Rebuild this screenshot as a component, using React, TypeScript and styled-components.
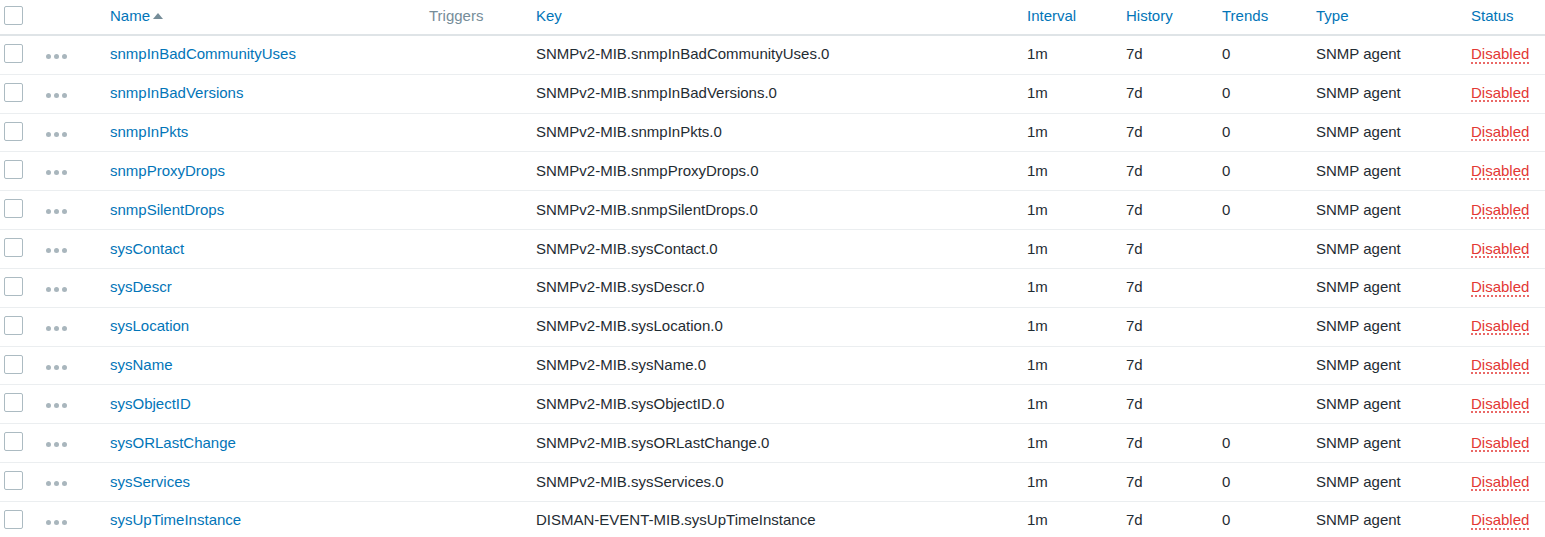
import React, { FunctionComponent } from "react";
import styled, { createGlobalStyle } from "styled-components";

type TItem = {
  name: string;
  key: string;
  interval: string;
  history: string;
  trends: string;
  type: string;
};

const items: TItem[] = [
  { name: "snmpInBadCommunityUses", key: "SNMPv2-MIB.snmpInBadCommunityUses.0", interval: "1m", history: "7d", trends: "0", type: "SNMP agent" },
  { name: "snmpInBadVersions", key: "SNMPv2-MIB.snmpInBadVersions.0", interval: "1m", history: "7d", trends: "0", type: "SNMP agent" },
  { name: "snmpInPkts", key: "SNMPv2-MIB.snmpInPkts.0", interval: "1m", history: "7d", trends: "0", type: "SNMP agent" },
  { name: "snmpProxyDrops", key: "SNMPv2-MIB.snmpProxyDrops.0", interval: "1m", history: "7d", trends: "0", type: "SNMP agent" },
  { name: "snmpSilentDrops", key: "SNMPv2-MIB.snmpSilentDrops.0", interval: "1m", history: "7d", trends: "0", type: "SNMP agent" },
  { name: "sysContact", key: "SNMPv2-MIB.sysContact.0", interval: "1m", history: "7d", trends: "", type: "SNMP agent" },
  { name: "sysDescr", key: "SNMPv2-MIB.sysDescr.0", interval: "1m", history: "7d", trends: "", type: "SNMP agent" },
  { name: "sysLocation", key: "SNMPv2-MIB.sysLocation.0", interval: "1m", history: "7d", trends: "", type: "SNMP agent" },
  { name: "sysName", key: "SNMPv2-MIB.sysName.0", interval: "1m", history: "7d", trends: "", type: "SNMP agent" },
  { name: "sysObjectID", key: "SNMPv2-MIB.sysObjectID.0", interval: "1m", history: "7d", trends: "", type: "SNMP agent" },
  { name: "sysORLastChange", key: "SNMPv2-MIB.sysORLastChange.0", interval: "1m", history: "7d", trends: "0", type: "SNMP agent" },
  { name: "sysServices", key: "SNMPv2-MIB.sysServices.0", interval: "1m", history: "7d", trends: "0", type: "SNMP agent" },
  { name: "sysUpTimeInstance", key: "DISMAN-EVENT-MIB.sysUpTimeInstance", interval: "1m", history: "7d", trends: "0", type: "SNMP agent" },
];

const GlobalStyle = createGlobalStyle`
  body {
    margin: 0;
    background: #ffffff;
    font-family: "Liberation Sans", Arial, sans-serif;
    font-size: 15px;
    color: #1f2c33;
  }
`;

const COLUMNS = "45px 65px 319px 107px 491px 99px 96px 94px 155px 74px";

const StyledTable = styled.div`
  width: 1545px;
`;

const StyledHeaderRow = styled.div`
  display: grid;
  grid-template-columns: ${COLUMNS};
  align-items: center;
  height: 36px;
  box-sizing: border-box;
  border-bottom: 2px solid #dfe4e7;
  padding-bottom: 3px;
`;

const StyledRow = styled.div`
  display: grid;
  grid-template-columns: ${COLUMNS};
  align-items: center;
  height: 38.83px;
  box-sizing: border-box;
  border-bottom: 1px solid #ebeef0;
`;

const StyledCell = styled.div`
  white-space: nowrap;
  overflow: hidden;
  padding-bottom: 2px;
`;

const StyledHeaderCell = styled.div<{ $muted?: boolean }>`
  white-space: nowrap;
  color: ${(p) => (p.$muted ? "#768d99" : "#0275b8")};
  display: flex;
  align-items: center;
  gap: 3px;
`;

const StyledCheckCell = styled.div`
  padding-left: 4px;
  display: flex;
  align-items: center;
`;

const StyledCheckbox = styled.span<{ $head?: boolean }>`
  display: block;
  width: 19px;
  height: 19px;
  margin-top: ${(p) => (p.$head ? "0" : "-3px")};
  box-sizing: border-box;
  border: 1px solid #acbbc2;
  border-radius: 2px;
  background: #ffffff;
`;

const StyledDots = styled.span`
  display: flex;
  gap: 3px;
  padding-top: 5px;
  padding-left: 1px;

  & > i {
    display: block;
    width: 5px;
    height: 5px;
    border-radius: 50%;
    background: #a9b6bd;
  }
`;

const StyledLink = styled.span`
  color: #0275b8;
`;

const StyledStatus = styled.span`
  color: #e33734;
  text-decoration: underline dotted #e33734;
  text-underline-offset: 3px;
`;

const SortArrow = () => (
  <svg width="10" height="7" viewBox="0 0 10 7">
    <path d="M0 7 L5 1 L10 7 Z" fill="#768d99" />
  </svg>
);

const App: FunctionComponent = () => {
  return (
    <>
      <GlobalStyle />
      <StyledTable>
        <StyledHeaderRow>
          <StyledCheckCell>
            <StyledCheckbox $head />
          </StyledCheckCell>
          <StyledHeaderCell />
          <StyledHeaderCell>
            Name
            <SortArrow />
          </StyledHeaderCell>
          <StyledHeaderCell $muted>Triggers</StyledHeaderCell>
          <StyledHeaderCell>Key</StyledHeaderCell>
          <StyledHeaderCell>Interval</StyledHeaderCell>
          <StyledHeaderCell>History</StyledHeaderCell>
          <StyledHeaderCell>Trends</StyledHeaderCell>
          <StyledHeaderCell>Type</StyledHeaderCell>
          <StyledHeaderCell>Status</StyledHeaderCell>
        </StyledHeaderRow>
        {items.map((item) => (
          <StyledRow key={item.name}>
            <StyledCheckCell>
              <StyledCheckbox />
            </StyledCheckCell>
            <StyledCell>
              <StyledDots>
                <i />
                <i />
                <i />
              </StyledDots>
            </StyledCell>
            <StyledCell>
              <StyledLink>{item.name}</StyledLink>
            </StyledCell>
            <StyledCell />
            <StyledCell>{item.key}</StyledCell>
            <StyledCell>{item.interval}</StyledCell>
            <StyledCell>{item.history}</StyledCell>
            <StyledCell>{item.trends}</StyledCell>
            <StyledCell>{item.type}</StyledCell>
            <StyledCell>
              <StyledStatus>Disabled</StyledStatus>
            </StyledCell>
          </StyledRow>
        ))}
      </StyledTable>
    </>
  );
};

export default App;
